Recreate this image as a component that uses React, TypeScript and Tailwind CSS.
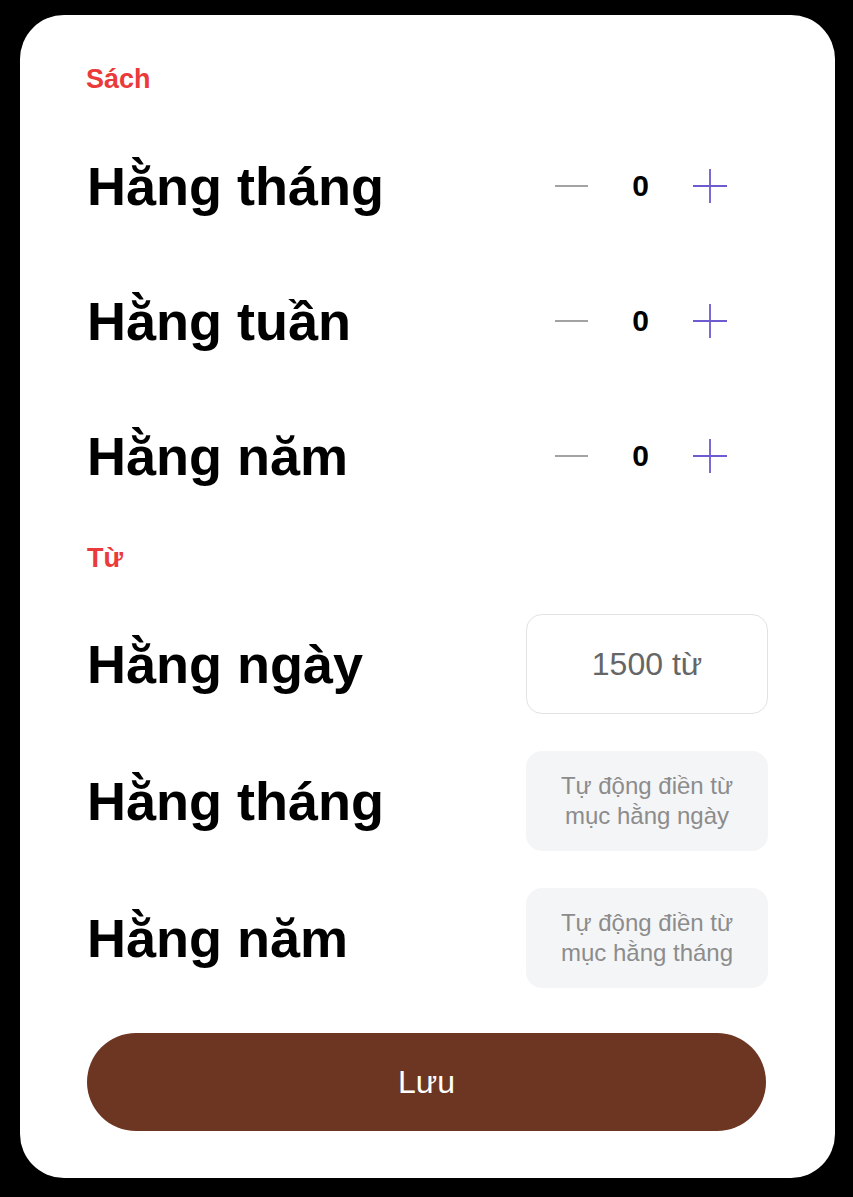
import React from 'react';

const font = { fontFamily: '"Liberation Sans", Arial, sans-serif' };

const Stepper: React.FC<{ value: number }> = ({ value }) => {
  return (
    <div className="grid grid-cols-[33px_1fr_34px] items-center w-[172px] mr-[41px]">
      <div className="h-[2px] bg-[#a3a3a3]"></div>
      <div className="text-center text-[30px] font-bold text-black leading-none">{value}</div>
      <svg width="34" height="34" viewBox="0 0 34 34">
        <path d="M17 0V34M0 17H34" stroke="#6d5bd0" strokeWidth="1.8" />
      </svg>
    </div>
  );
};

const CountRow: React.FC<{ label: string }> = ({ label }) => (
  <div className="h-[135px] flex items-center justify-between">
    <span className="text-[54px] font-bold text-black leading-none pl-[1px]">{label}</span>
    <Stepper value={0} />
  </div>
);

const AutoRow: React.FC<{ label: string; hint: [string, string] }> = ({ label, hint }) => (
  <div className="h-[100px] flex items-center justify-between">
    <span className="text-[54px] font-bold text-black leading-none pl-[1px]">{label}</span>
    <div className="w-[242px] h-[100px] rounded-[16px] bg-[#f4f5f7] flex flex-col items-center justify-center text-[24px] leading-[30px] text-[#8c8c8c]">
      <span>{hint[0]}</span>
      <span>{hint[1]}</span>
    </div>
  </div>
);

export default function App() {
  return (
    <div className="bg-black w-full h-[1197px] pt-[15px] px-[20px]" style={font}>
      <div className="w-[815px] h-[1163px] bg-white rounded-[44px] pt-[48px] pl-[66px] pr-[67px]">
        {/* Sách */}
        <div className="h-[32px] flex items-center text-[27px] font-bold text-[#ea3a3a]">Sách</div>
        <div className="mt-[23px]">
          <CountRow label="Hằng tháng" />
          <CountRow label="Hằng tuần" />
          <CountRow label="Hằng năm" />
        </div>

        {/* Từ */}
        <div className="mt-[19px] h-[32px] flex items-center text-[27px] font-bold text-[#ea3a3a] pl-[1px]">Từ</div>
        <div className="mt-[40px] flex flex-col gap-[37px]">
          <div className="h-[100px] flex items-center justify-between">
            <span className="text-[54px] font-bold text-black leading-none pl-[1px]">Hằng ngày</span>
            <div className="w-[242px] h-[100px] rounded-[16px] border border-[#e2e2e2] bg-white flex items-center justify-center text-[32px] text-[#666666]">
              1500 từ
            </div>
          </div>
          <AutoRow label="Hằng tháng" hint={['Tự động điền từ', 'mục hằng ngày']} />
          <AutoRow label="Hằng năm" hint={['Tự động điền từ', 'mục hằng tháng']} />
        </div>

        <button className="mt-[45px] ml-[1px] w-[679px] h-[98px] rounded-full bg-[#6d3622] text-white text-[32px] flex items-center justify-center">
          Lưu
        </button>
      </div>
    </div>
  );
}
